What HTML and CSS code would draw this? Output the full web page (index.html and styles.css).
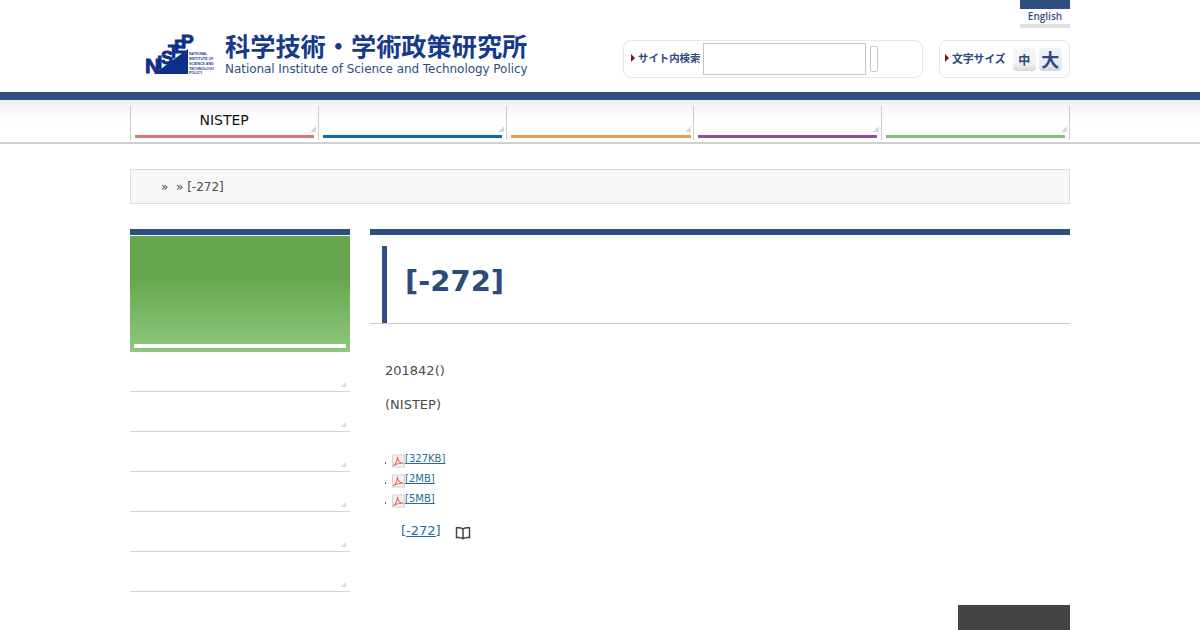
FILE: index.html
```html
<!DOCTYPE html>
<html lang="ja">
<head>
<meta charset="utf-8">
<title>[-272]</title>
<link rel="stylesheet" href="styles.css">
</head>
<body>
<header class="header">
  <div class="wrap header-inner">
    <a class="logo" href="#">
      <svg class="logo-mark" width="72" height="42" viewBox="0 0 72 42">
        <path fill="#0f2e8a" d="M10 41L44 16V41Z"/>
        <text class="mark-letters" x="1" y="40" font-size="21">N</text>
        <text class="mark-letters" x="13" y="36" font-size="19">I</text>
        <text class="mark-letters" x="17" y="31" font-size="18">S</text>
        <text class="mark-letters" x="24" y="25" font-size="18">T</text>
        <text class="mark-letters" x="30" y="20" font-size="18">E</text>
        <text class="mark-letters" x="37" y="15" font-size="19">P</text>
        <text class="mark-small" x="45" y="22">NATIONAL</text>
        <text class="mark-small" x="45" y="27">INSTITUTE OF</text>
        <text class="mark-small" x="45" y="32">SCIENCE AND</text>
        <text class="mark-small" x="45" y="37">TECHNOLOGY</text>
        <text class="mark-small" x="45" y="41">POLICY</text>
      </svg>
      <span class="logo-text">
        <span class="logo-ja">科学技術・学術政策研究所</span>
        <span class="logo-en">National Institute of Science and Technology Policy</span>
      </span>
    </a>
    <div class="tools">
      <a class="lang" href="#">English</a>
      <div class="tool-row">
        <form class="tool search">
          <span class="tool-label tool-label-search">サイト内検索</span>
          <input class="search-input" type="text" aria-label="サイト内検索">
          <button class="search-btn" type="button" aria-label="検索"></button>
        </form>
        <div class="tool size">
          <span class="tool-label">文字サイズ</span>
          <span class="size-btn">中</span>
          <span class="size-btn size-btn-large">大</span>
        </div>
      </div>
    </div>
  </div>
</header>
<div class="rule"></div>
<nav class="nav">
  <ul class="wrap nav-list">
    <li class="nav-item nav-red"><a href="#">NISTEP</a></li>
    <li class="nav-item nav-blue"><a href="#"></a></li>
    <li class="nav-item nav-orange"><a href="#"></a></li>
    <li class="nav-item nav-purple"><a href="#"></a></li>
    <li class="nav-item nav-green"><a href="#"></a></li>
  </ul>
</nav>
<div class="wrap crumb">» &nbsp;» [-272]</div>
<div class="wrap columns">
  <aside class="side">
    <div class="side-head"><div class="side-white"></div></div>
    <ul class="side-list">
      <li></li><li></li><li></li><li></li><li></li><li></li>
    </ul>
  </aside>
  <main class="main">
    <h1 class="title"><span class="title-text">[-272]</span></h1>
    <div class="body-text">
      <p>201842()</p>
      <p>(NISTEP)</p>
      <ul class="files">
        <li><svg class="pdf" width="13" height="14" viewBox="0 0 14 14"><rect x=".5" y=".5" width="13" height="13" fill="#f5f1f1" stroke="#d2cdcd"/><path fill="none" stroke="#e0655d" stroke-width="1.100" d="M1.500 12C4 10.500 5.500 7 5.800 2.500C6 6 8 9 12.500 9.500C8.500 9 4.500 10 1.500 12Z"/></svg><a href="#">[327KB]</a></li>
        <li><svg class="pdf" width="13" height="14" viewBox="0 0 14 14"><rect x=".5" y=".5" width="13" height="13" fill="#f5f1f1" stroke="#d2cdcd"/><path fill="none" stroke="#e0655d" stroke-width="1.100" d="M1.500 12C4 10.500 5.500 7 5.800 2.500C6 6 8 9 12.500 9.500C8.500 9 4.500 10 1.500 12Z"/></svg><a href="#">[2MB]</a></li>
        <li><svg class="pdf" width="13" height="14" viewBox="0 0 14 14"><rect x=".5" y=".5" width="13" height="13" fill="#f5f1f1" stroke="#d2cdcd"/><path fill="none" stroke="#e0655d" stroke-width="1.100" d="M1.500 12C4 10.500 5.500 7 5.800 2.500C6 6 8 9 12.500 9.500C8.500 9 4.500 10 1.500 12Z"/></svg><a href="#">[5MB]</a></li>
      </ul>
      <p class="book-line"><a class="book-link" href="#">[-272]<span class="book-gap"></span></a><svg class="book" width="16" height="14" viewBox="0 0 16 14"><path fill="none" stroke="#444" stroke-width="1.500" d="M8 3C6.500 1.800 4 1.500 1.500 1.800V11.500C4 11.200 6.500 11.500 8 12.800C9.500 11.500 12 11.200 14.500 11.500V1.800C12 1.500 9.500 1.800 8 3V12.800"/></svg></p>
    </div>
  </main>
</div>
<div class="wrap foot"><div class="pagetop"></div></div>
</body>
</html>
```
FILE: styles.css
```css
* { box-sizing: border-box; }
html, body { margin: 0; padding: 0; }
body {
  background: #fff;
  color: #4a4a4a;
  font-family: "DejaVu Sans", sans-serif;
  font-size: 13px;
  overflow-x: hidden;
}
a { color: inherit; text-decoration: none; }
ul { list-style: none; margin: 0; padding: 0; }
.wrap { width: 940px; margin-left: auto; margin-right: auto; }

.header { height: 92px; background: linear-gradient(#fff 80px, #fffef8); }
.header-inner { display: flex; justify-content: space-between; height: 92px; }
.logo { display: flex; align-items: flex-start; padding: 33px 0 0 14px; }
.logo-mark { display: block; margin-right: 9px; flex: none; overflow: visible; }
.mark-letters {
  font-family: "Liberation Sans", sans-serif;
  font-weight: 700;
  fill: #0f2e8a;
  stroke: #0f2e8a;
  stroke-width: .9px;
}
.mark-small { font: 700 3.600px "Liberation Sans", sans-serif; fill: #26408a; }
.logo-text { display: flex; flex-direction: column; margin-top: -2px; }
.logo-ja {
  font: 700 25.200px/28px "Noto Sans CJK JP", sans-serif;
  color: #153a8c;
  white-space: nowrap;
}
.logo-en {
  margin-top: 3px;
  font: 400 12px/14px "DejaVu Sans", sans-serif;
  letter-spacing: -.05px;
  color: #2c4f80;
  white-space: nowrap;
}
.tools { display: flex; flex-direction: column; align-items: flex-end; width: 447px; flex: none; }
.lang {
  display: block;
  width: 50px;
  height: 28px;
  border-top: 9px solid #2f4f83;
  border-bottom: 4px solid #e0e0e0;
  font: 600 10px/14px "Open Sans", sans-serif;
  text-align: center;
  color: #2f4f83;
}
.tool-row { display: flex; gap: 16px; margin-top: 12px; }
.tool {
  display: flex;
  align-items: center;
  height: 38px;
  border: 1px solid #e6e6e6;
  border-radius: 8px;
  background: #fff;
}
.search { width: 300px; padding-left: 7px; }
.size { width: 131px; padding-left: 5px; }
.tool-label {
  position: relative;
  top: -1px;
  padding-left: 7px;
  font: 700 10.800px/14px "Noto Sans CJK JP", sans-serif;
  color: #2c4a7c;
  white-space: nowrap;
}
.tool-label-search { font-size: 10.400px; }
.tool-label::before {
  content: "";
  position: absolute;
  left: 0;
  top: 3px;
  border-left: 4px solid #7a1616;
  border-top: 4px solid transparent;
  border-bottom: 4px solid transparent;
}
.search-input {
  width: 163px;
  height: 32px;
  margin: 0 0 0 3px;
  padding: 0;
  border: 1px solid #c4c4c4;
  background: #fff;
}
.search-btn {
  width: 8px;
  height: 26px;
  margin-left: 4px;
  padding: 0;
  border: 1px solid #c8c8c8;
  border-radius: 2px;
  background: #fff;
}
.size-btn {
  width: 23px;
  height: 23px;
  margin-left: 3px;
  border-radius: 4px;
  background: linear-gradient(#f6f6f6, #f2f2f2 70%, #d6d6d6);
  font: 700 12px/23px "Noto Sans CJK JP", sans-serif;
  text-align: center;
  color: #2c4a7c;
}
.tool-label + .size-btn { margin-left: 7px; }
.size-btn-large { font-size: 18px; background: linear-gradient(#eef1f6, #e8ecf3 70%, #cfd5e0); }

.rule { height: 8px; background: #2f4f83; }
.nav {
  height: 44px;
  border-bottom: 2px solid #d0d0d0;
  background: linear-gradient(#eff1ef, #fff 22px);
}
.nav-list { display: flex; padding-top: 6px; height: 40px; }
.nav-item {
  position: relative;
  flex: 1 1 0;
  height: 34px;
  border-left: 1px solid #ccc;
  padding: 0 4px 1px;
  display: flex;
}
.nav-item:last-child { border-right: 1px solid #ccc; }
.nav-item a {
  flex: 1;
  height: 32px;
  border-bottom: 3px solid #e0707a;
  font-size: 14px;
  line-height: 29px;
  text-align: center;
  color: #111;
}
.nav-item::after {
  content: "";
  position: absolute;
  right: 2px;
  top: 20px;
  border-left: 6px solid transparent;
  border-bottom: 6px solid #d5d8da;
}
.nav-red a { padding-right: 1px; }
.nav-blue a { border-color: #0f6ba8; }
.nav-orange { padding-right: 2px; }
.nav-orange a { border-color: #e89a4f; }
.nav-purple a { border-color: #8d4f9e; }
.nav-green a { border-color: #84c070; }

.crumb {
  height: 35px;
  margin-top: 25px;
  padding-left: 30px;
  border: 1px solid #ddd;
  background: #f8f8f8;
  font-size: 12px;
  line-height: 35px;
}
.columns { display: flex; gap: 20px; margin-top: 25px; }
.side { width: 220px; flex: none; }
.side-head {
  height: 123px;
  padding-top: 109px;
  border-top: 6px solid #2f4f83;
  background: linear-gradient(#fff 1px, #68a752 1px, #65a64f 40px, #90c77c 100%);
}
.side-white { height: 4px; margin: 0 4px; background: #fff; }
.side-list li {
  position: relative;
  height: 40px;
  border-bottom: 1px solid #cfd3e3;
}
.side-list li::after {
  content: "";
  position: absolute;
  right: 4px;
  bottom: 4px;
  border-left: 5px solid transparent;
  border-bottom: 5px solid #d5dcd5;
}
.main { width: 700px; }
.title {
  margin: 0;
  padding-top: 11px;
  height: 95px;
  border-top: 6px solid #2f4f83;
  border-bottom: 1px solid #ccc;
}
.title-text {
  display: block;
  height: 77px;
  margin-left: 12px;
  padding-left: 18px;
  border-left: 5px solid #2f4f83;
  font-size: 29px;
  font-weight: 700;
  line-height: 70px;
  color: #2c4a7c;
}
.body-text { padding: 38px 15px 0; line-height: 18px; }
.body-text p { margin: 0 0 16px; }
.files { margin-top: 38px; }
.files li {
  position: relative;
  height: 20px;
  padding-left: 7px;
  font-size: 10px;
  line-height: 14px;
}
.files li::before {
  content: "";
  position: absolute;
  left: 0;
  top: 10px;
  width: 1px;
  height: 2px;
  background: #666;
}
.files a { color: #1f6e93; text-decoration: underline; vertical-align: top; }
.pdf { vertical-align: top; margin-top: 2px; }
.body-text .book-line { display: flex; align-items: flex-start; margin: 10px 0 0 16px; }
.book-link { color: #1f6e93; text-decoration: underline; }
.book-gap { display: inline-block; width: 14px; }
.book { margin-top: 4px; }
.foot { display: flex; justify-content: flex-end; padding-top: 13px; }
.pagetop { width: 112px; height: 25px; background: #444; }
```
